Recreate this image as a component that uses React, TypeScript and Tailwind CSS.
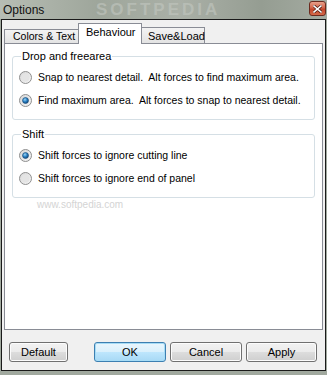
import React from 'react'

const font = { fontFamily: '"Liberation Sans", Arial, sans-serif' }

function Radio({ checked }: { checked?: boolean }) {
  return (
    <svg width="13" height="13" viewBox="0 0 13 13" className="shrink-0">
      <defs>
        <linearGradient id={checked ? 'rg-on' : 'rg-off'} x1="0" y1="0" x2="1" y2="1">
          <stop offset="0" stopColor="#d6d6d6" />
          <stop offset="1" stopColor="#f6f6f6" />
        </linearGradient>
        <radialGradient id="dot" cx="0.4" cy="0.35" r="0.7">
          <stop offset="0" stopColor="#9fd6f5" />
          <stop offset="0.5" stopColor="#2a81c4" />
          <stop offset="1" stopColor="#0d3d6e" />
        </radialGradient>
      </defs>
      <circle cx="6.5" cy="6.5" r="6" fill={`url(#${checked ? 'rg-on' : 'rg-off'})`} stroke="#8f8f8f" />
      {checked ? (
        <circle cx="6.5" cy="6.5" r="3" fill="url(#dot)" stroke="#1b4d7a" strokeWidth="0.6" />
      ) : (
        <circle cx="6.5" cy="6.5" r="4" fill="#e4e4e4" />
      )}
    </svg>
  )
}

function Option({ label, checked }: { label: string; checked?: boolean }) {
  return (
    <div className="flex items-center h-[13px] gap-[6px]">
      <Radio checked={checked} />
      <span className="text-[10.5px] text-black leading-none whitespace-pre">{label}</span>
    </div>
  )
}

function Group({ title, children, h }: { title: string; children: React.ReactNode; h: string }) {
  return (
    <div className={`relative mx-[7px] border border-[#d5dfe5] rounded-[3px] ${h}`}>
      <span className="absolute left-[8px] -top-[7px] bg-white px-[1px] text-[11px] leading-[13px] text-black whitespace-nowrap">
        {title}
      </span>
      {children}
    </div>
  )
}

function Btn({ label, primary, w }: { label: string; primary?: boolean; w: string }) {
  return (
    <button
      className={`${w} h-[20px] rounded-[3px] border text-[11px] text-black leading-none ${
        primary
          ? 'border-[#3c7fb1] shadow-[inset_0_0_0_1px_#a6dcf6] bg-[linear-gradient(#eaf6fd_0%,#d9f0fc_50%,#bee6fd_50%,#a7d9f5_100%)]'
          : 'border-[#707070] shadow-[inset_0_0_0_1px_#fcfcfc] bg-[linear-gradient(#f2f2f2_0%,#ebebeb_50%,#dddddd_50%,#cfcfcf_100%)]'
      }`}
    >
      {label}
    </button>
  )
}

export default function App() {
  return (
    <div className="w-[327px] h-[375px] bg-[#a1a99f] flex flex-col overflow-hidden" style={font}>
      {/* title bar */}
      <div className="relative h-[19px] flex items-center overflow-hidden bg-[linear-gradient(90deg,#b7bdb4_0%,#9ea69b_30%,#aab0a7_55%,#959d92_80%,#a4aba1_100%)]">
        <span className="pl-[3px] text-[12px] text-[#111] leading-none">Options</span>
        <span className="absolute left-[96px] top-[1px] text-[17px] font-bold tracking-[3px] text-[#c2c7c0] opacity-60 leading-[17px]">
          SOFTPEDIA
        </span>
        <div className="absolute right-[1px] top-[1px] w-[17px] h-[15px] rounded-[3px] border border-[#6b2a1e] bg-[linear-gradient(#e8a08a_0%,#d3654a_45%,#c2452a_55%,#d56a4a_100%)] flex items-center justify-center">
          <svg width="9" height="8" viewBox="0 0 9 8">
            <path d="M1 1 L8 7 M8 1 L1 7" stroke="#4a1b12" strokeWidth="3" strokeLinecap="square" />
            <path d="M1 1 L8 7 M8 1 L1 7" stroke="#ffffff" strokeWidth="1.6" strokeLinecap="square" />
          </svg>
        </div>
      </div>

      {/* window body */}
      <div className="mx-[1px] h-[352px] border border-[#1a1a1a] bg-[#f0f0f0] flex flex-col">
        {/* tabs */}
        <div className="flex items-end h-[23px] pl-[2px]">
          <div className="h-[14px] w-[75px] pl-[8px] border border-b-0 border-[#898c95] bg-[linear-gradient(#f3f3f3,#e3e3e3)] text-[10.5px] leading-[13px] text-black whitespace-nowrap">
            Colors &amp; Text
          </div>
          <div className="relative z-10 -mb-[1px] h-[21px] w-[64px] -ml-[1px] border border-b-0 border-[#898c95] bg-white text-[11px] leading-[16px] text-black pl-[7px] whitespace-nowrap">
            Behaviour
          </div>
          <div className="h-[16px] w-[64px] -ml-[1px] border border-b-0 border-[#898c95] bg-[linear-gradient(#f3f3f3,#e3e3e3)] text-[11px] leading-[16px] text-black pl-[6px] whitespace-nowrap">
            Save&amp;Load
          </div>
        </div>

        {/* panel */}
        <div className="mx-[2px] h-[287px] border border-[#898c95] bg-white pt-[12px] flex flex-col">
          <Group title="Drop and freearea" h="h-[64px]">
            <div className="flex flex-col gap-[10px] pl-[6px] pt-[14px]">
              <Option label="Snap to nearest detail.  Alt forces to find maximum area." />
              <Option label="Find maximum area.  Alt forces to snap to nearest detail." checked />
            </div>
          </Group>
          <div className="h-[14px]" />
          <Group title="Shift" h="h-[64px]">
            <div className="flex flex-col gap-[10px] pl-[6px] pt-[14px]">
              <Option label="Shift forces to ignore cutting line" checked />
              <Option label="Shift forces to ignore end of panel" />
            </div>
          </Group>
          <div className="pl-[32px] pt-[1px] text-[10px] text-[#d4d4d4] leading-[12px]">www.softpedia.com</div>
        </div>

        {/* buttons */}
        <div className="flex items-center pt-[12px] pl-[7px]">
          <Btn label="Default" w="w-[59px]" />
          <div className="w-[26px]" />
          <Btn label="OK" primary w="w-[72px]" />
          <div className="w-[4px]" />
          <Btn label="Cancel" w="w-[72px]" />
          <div className="w-[4px]" />
          <Btn label="Apply" w="w-[71px]" />
        </div>
      </div>
    </div>
  )
}
